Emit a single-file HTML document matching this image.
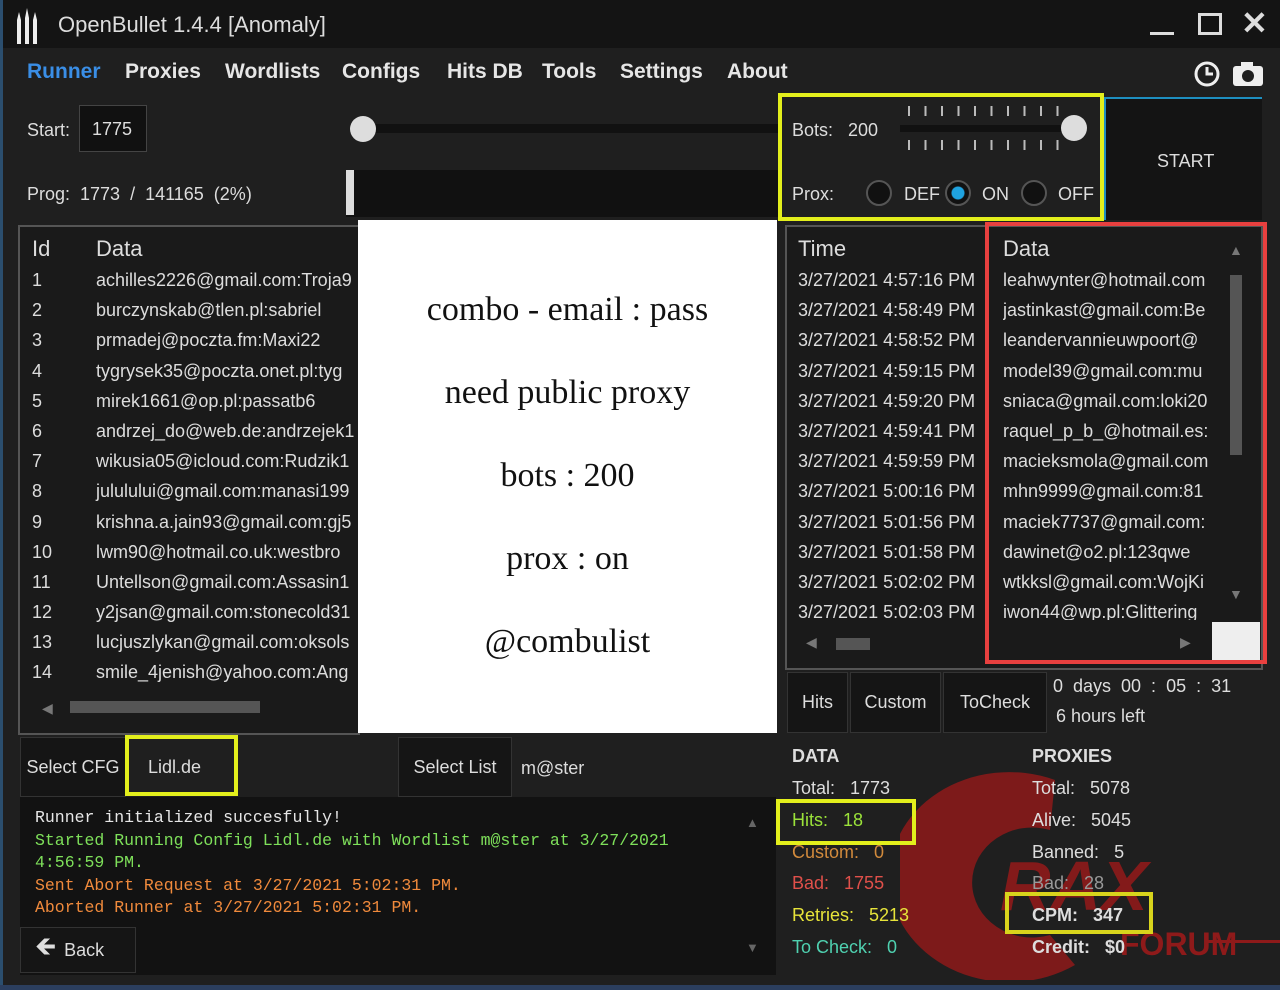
<!DOCTYPE html>
<html><head><meta charset="utf-8"><style>
*{margin:0;padding:0;box-sizing:border-box}
body{width:1280px;height:990px;background:#1f1f1f;position:relative;overflow:hidden;font-family:"Liberation Sans",sans-serif;color:#ddd}
.a{position:absolute;white-space:nowrap}
.nav{font-size:21px;font-weight:bold;color:#e6e6e6;top:60px}
.t{font-size:18px;color:#ddd}
.row{font-size:18px;color:#ddd;height:30.2px;line-height:30px}
.mono{font-family:"Liberation Mono",monospace;font-size:16.5px}
.btn{background:#151515;border:1px solid #333;font-size:18px;color:#ddd;display:flex;align-items:center;justify-content:center}
.yb{border:4px solid #e3ef1c}
.radio{width:26px;height:26px;border-radius:50%;border:2px solid #555;background:#111}
</style></head><body>
<div class="a" style="left:0;top:0;width:1280px;height:48px;background:#141414"></div>
<div class="a" style="left:0;top:0;width:3px;height:990px;background:#2b4e6e"></div>
<div class="a" style="left:0;top:985px;width:1280px;height:5px;background:#2b3e5e"></div>
<svg class="a" style="left:14px;top:8px" width="26" height="38"><path d="M3 12 L5 4 L7 12 V36 H3Z M11 10 L13 0 L15 10 V36 H11Z M19 12 L21 4 L23 12 V36 H19Z" fill="#eee"/></svg>
<div class="a" style="left:58px;top:12px;font-size:22px;color:#ddd">OpenBullet 1.4.4 [Anomaly]</div>
<div class="a" style="left:1150px;top:32px;width:24px;height:3px;background:#ddd"></div>
<div class="a" style="left:1198px;top:13px;width:24px;height:22px;border:3px solid #ddd"></div>
<div class="a" style="left:1241px;top:4px;font-size:32px;font-weight:bold;color:#ddd">✕</div>
<div class="a nav" style="left:27px;color:#3a8ee6">Runner</div>
<div class="a nav" style="left:125px">Proxies</div>
<div class="a nav" style="left:225px">Wordlists</div>
<div class="a nav" style="left:342px">Configs</div>
<div class="a nav" style="left:447px">Hits DB</div>
<div class="a nav" style="left:542px">Tools</div>
<div class="a nav" style="left:620px">Settings</div>
<div class="a nav" style="left:727px">About</div>
<svg class="a" style="left:1193px;top:60px" width="72" height="28"><circle cx="14" cy="14" r="11" fill="none" stroke="#eee" stroke-width="3"/><path d="M14 7V14H20" stroke="#eee" stroke-width="3" fill="none"/><rect x="40" y="6" width="30" height="20" rx="3" fill="#eee"/><rect x="48" y="2" width="12" height="6" fill="#eee"/><circle cx="55" cy="16" r="6" fill="#1f1f1f"/></svg>
<div class="a t" style="left:27px;top:120px">Start:</div>
<div class="a" style="left:79px;top:105px;width:68px;height:47px;background:#111;border:1px solid #444"></div>
<div class="a t" style="left:92px;top:119px">1775</div>
<div class="a" style="left:350px;top:124px;width:430px;height:9px;background:#111"></div>
<div class="a" style="left:350px;top:116px;width:26px;height:26px;border-radius:50%;background:#ddd"></div>
<div class="a t" style="left:27px;top:184px">Prog: &nbsp;1773 &nbsp;/ &nbsp;141165 &nbsp;(2%)</div>
<div class="a" style="left:346px;top:170px;width:434px;height:47px;background:#111"></div>
<div class="a" style="left:346px;top:170px;width:8px;height:45px;background:#ddd"></div>
<div class="a yb" style="left:778px;top:93px;width:326px;height:128px"></div>
<div class="a t" style="left:792px;top:120px">Bots: &nbsp;&nbsp;200</div>
<div class="a" style="left:900px;top:125px;width:180px;height:7px;background:#111"></div>
<div class="a" style="left:908px;top:106px;width:165px;height:10px;background:repeating-linear-gradient(90deg,#bbb 0 2px,transparent 2px 16.5px)"></div>
<div class="a" style="left:908px;top:140px;width:165px;height:10px;background:repeating-linear-gradient(90deg,#bbb 0 2px,transparent 2px 16.5px)"></div>
<div class="a" style="left:1061px;top:115px;width:26px;height:26px;border-radius:50%;background:#ddd"></div>
<div class="a t" style="left:792px;top:184px">Prox:</div>
<div class="a radio" style="left:866px;top:180px"></div>
<div class="a t" style="left:904px;top:184px">DEF</div>
<div class="a radio" style="left:945px;top:180px;border-color:#555;background:radial-gradient(circle,#1fa3e0 0 6px,#111 7px)"></div>
<div class="a t" style="left:982px;top:184px">ON</div>
<div class="a radio" style="left:1021px;top:180px"></div>
<div class="a t" style="left:1058px;top:184px">OFF</div>
<div class="a" style="left:1104px;top:97px;width:158px;height:123px;background:#141414;border-top:2px solid #1e8fc0;border-left:2px solid #1e8fc0"></div>
<div class="a t" style="left:1157px;top:151px">START</div>
<!-- left table -->
<div class="a" style="left:18px;top:225px;width:342px;height:510px;background:#1a1a1a;border:2px solid #555"></div>
<div class="a" style="left:32px;top:236px;font-size:22px;color:#ddd">Id</div>
<div class="a" style="left:96px;top:236px;font-size:22px;color:#ddd">Data</div>
<div class="a" style="left:20px;top:265px;width:338px;height:418px;overflow:hidden">
<div style="position:absolute;left:12px;top:0">
<div class="row">1</div><div class="row">2</div><div class="row">3</div><div class="row">4</div><div class="row">5</div><div class="row">6</div><div class="row">7</div><div class="row">8</div><div class="row">9</div><div class="row">10</div><div class="row">11</div><div class="row">12</div><div class="row">13</div><div class="row">14</div></div>
<div style="position:absolute;left:76px;top:0">
<div class="row">achilles2226@gmail.com:Troja9</div><div class="row">burczynskab@tlen.pl:sabriel</div><div class="row">prmadej@poczta.fm:Maxi22</div><div class="row">tygrysek35@poczta.onet.pl:tyg</div><div class="row">mirek1661@op.pl:passatb6</div><div class="row">andrzej_do@web.de:andrzejek1</div><div class="row">wikusia05@icloud.com:Rudzik1</div><div class="row">jululului@gmail.com:manasi199</div><div class="row">krishna.a.jain93@gmail.com:gj5</div><div class="row">lwm90@hotmail.co.uk:westbro</div><div class="row">Untellson@gmail.com:Assasin1</div><div class="row">y2jsan@gmail.com:stonecold31</div><div class="row">lucjuszlykan@gmail.com:oksols</div><div class="row">smile_4jenish@yahoo.com:Ang</div></div></div>
<div class="a" style="left:42px;top:700px;font-size:14px;color:#777">◀</div>
<div class="a" style="left:70px;top:701px;width:190px;height:12px;background:#555"></div>
<!-- white overlay -->
<div class="a" style="left:358px;top:220px;width:419px;height:513px;background:#fff;font-family:'Liberation Serif',serif;font-size:34px;color:#111;text-align:center">
<div style="position:absolute;top:71px;width:100%">combo - email : pass</div>
<div style="position:absolute;top:154px;width:100%">need public proxy</div>
<div style="position:absolute;top:237px;width:100%">bots : 200</div>
<div style="position:absolute;top:320px;width:100%">prox : on</div>
<div style="position:absolute;top:403px;width:100%">@combulist</div></div>
<!-- right table -->
<div class="a" style="left:785px;top:225px;width:478px;height:445px;background:#1a1a1a;border:2px solid #555"></div>
<div class="a" style="left:798px;top:236px;font-size:22px;color:#ddd">Time</div>
<div class="a" style="left:1003px;top:236px;font-size:22px;color:#ddd">Data</div>
<div class="a" style="left:787px;top:265px;width:425px;height:355px;overflow:hidden">
<div style="position:absolute;left:11px;top:0">
<div class="row">3/27/2021 4:57:16 PM</div><div class="row">3/27/2021 4:58:49 PM</div><div class="row">3/27/2021 4:58:52 PM</div><div class="row">3/27/2021 4:59:15 PM</div><div class="row">3/27/2021 4:59:20 PM</div><div class="row">3/27/2021 4:59:41 PM</div><div class="row">3/27/2021 4:59:59 PM</div><div class="row">3/27/2021 5:00:16 PM</div><div class="row">3/27/2021 5:01:56 PM</div><div class="row">3/27/2021 5:01:58 PM</div><div class="row">3/27/2021 5:02:02 PM</div><div class="row">3/27/2021 5:02:03 PM</div></div>
<div style="position:absolute;left:216px;top:0;width:209px;overflow:hidden">
<div class="row">leahwynter@hotmail.com</div><div class="row">jastinkast@gmail.com:Be</div><div class="row">leandervannieuwpoort@</div><div class="row">model39@gmail.com:mu</div><div class="row">sniaca@gmail.com:loki20</div><div class="row">raquel_p_b_@hotmail.es:</div><div class="row">macieksmola@gmail.com</div><div class="row">mhn9999@gmail.com:81</div><div class="row">maciek7737@gmail.com:</div><div class="row">dawinet@o2.pl:123qwe</div><div class="row">wtkksl@gmail.com:WojKi</div><div class="row">iwon44@wp.pl:Glittering</div></div></div>
<div class="a" style="left:1229px;top:242px;font-size:14px;color:#777">▲</div>
<div class="a" style="left:1229px;top:586px;font-size:14px;color:#777">▼</div>
<div class="a" style="left:1230px;top:275px;width:12px;height:180px;background:#555"></div>
<div class="a" style="left:806px;top:634px;font-size:14px;color:#777">◀</div>
<div class="a" style="left:1180px;top:634px;font-size:14px;color:#777">▶</div>
<div class="a" style="left:836px;top:638px;width:34px;height:12px;background:#555"></div>
<div class="a" style="left:1212px;top:622px;width:48px;height:40px;background:#eee"></div>
<div class="a" style="left:985px;top:222px;width:282px;height:442px;border:4px solid #e8403f"></div>
<div class="a btn" style="left:787px;top:672px;width:61px;height:61px">Hits</div>
<div class="a btn" style="left:850px;top:672px;width:91px;height:61px">Custom</div>
<div class="a btn" style="left:943px;top:672px;width:104px;height:61px">ToCheck</div>
<div class="a t" style="left:1053px;top:676px">0 &nbsp;days &nbsp;00 &nbsp;: &nbsp;05 &nbsp;: &nbsp;31</div>
<div class="a t" style="left:1056px;top:706px">6 hours left</div>
<!-- bottom left -->
<div class="a btn" style="left:20px;top:737px;width:106px;height:60px">Select CFG</div>
<div class="a yb" style="left:125px;top:735px;width:113px;height:61px"></div>
<div class="a t" style="left:148px;top:757px">Lidl.de</div>
<div class="a btn" style="left:398px;top:737px;width:114px;height:60px">Select List</div>
<div class="a t" style="left:521px;top:758px">m@ster</div>
<div class="a" style="left:20px;top:797px;width:756px;height:178px;background:#121212"></div>
<div class="a mono" style="left:35px;top:807px;line-height:22.5px">
<div style="color:#e6e6e6">Runner initialized succesfully!</div>
<div style="color:#7ee05a">Started Running Config Lidl.de with Wordlist m@ster at 3/27/2021</div>
<div style="color:#7ee05a">4:56:59 PM.</div>
<div style="color:#f08a3c">Sent Abort Request at 3/27/2021 5:02:31 PM.</div>
<div style="color:#f08a3c">Aborted Runner at 3/27/2021 5:02:31 PM.</div></div>
<div class="a" style="left:746px;top:815px;font-size:13px;color:#666">▲</div>
<div class="a" style="left:746px;top:940px;font-size:13px;color:#666">▼</div>
<div class="a btn" style="left:20px;top:927px;width:116px;height:46px;justify-content:flex-start;padding-left:14px"><span style="font-size:26px;margin-right:8px">🡸</span>Back</div>
<!-- watermark -->
<svg class="a" style="left:900px;top:770px" width="380" height="210"><path d="M155 10 A120 105 0 1 0 175 195 L150 165 A60 55 0 1 1 150 60 Z" fill="#8e1a1a" opacity="0.85"/><text x="100" y="140" font-family="Liberation Sans" font-weight="bold" font-style="italic" font-size="70" fill="#8e1a1a" opacity="0.9">RAX</text><text x="220" y="185" font-family="Liberation Sans" font-weight="bold" font-size="32" fill="#8e1a1a">FORUM</text><rect x="305" y="170" width="75" height="3" fill="#8e1a1a"/></svg>
<div class="a" style="left:792px;top:746px;font-size:18px;font-weight:bold;color:#ddd">DATA</div>
<div class="a t" style="left:792px;top:778px">Total: &nbsp;&nbsp;1773</div>
<div class="a yb" style="left:776px;top:799px;width:140px;height:46px"></div>
<div class="a t" style="left:792px;top:810px;color:#9be23a">Hits: &nbsp;&nbsp;18</div>
<div class="a t" style="left:792px;top:842px;color:#d28a3c">Custom: &nbsp;&nbsp;0</div>
<div class="a t" style="left:792px;top:873px;color:#e0504a">Bad: &nbsp;&nbsp;1755</div>
<div class="a t" style="left:792px;top:905px;color:#e7e43a">Retries: &nbsp;&nbsp;5213</div>
<div class="a t" style="left:792px;top:937px;color:#4fd1b0">To Check: &nbsp;&nbsp;0</div>
<div class="a" style="left:1032px;top:746px;font-size:18px;font-weight:bold;color:#ddd">PROXIES</div>
<div class="a t" style="left:1032px;top:778px">Total: &nbsp;&nbsp;5078</div>
<div class="a t" style="left:1032px;top:810px">Alive: &nbsp;&nbsp;5045</div>
<div class="a t" style="left:1032px;top:842px">Banned: &nbsp;&nbsp;5</div>
<div class="a t" style="left:1032px;top:873px;color:#999">Bad: &nbsp;&nbsp;28</div>
<div class="a yb" style="left:1005px;top:892px;width:148px;height:42px;border-color:#d8d41c"></div>
<div class="a t" style="left:1032px;top:905px;font-weight:bold">CPM: &nbsp;&nbsp;347</div>
<div class="a t" style="left:1032px;top:937px;font-weight:bold">Credit: &nbsp;&nbsp;$0</div>
</body></html>
